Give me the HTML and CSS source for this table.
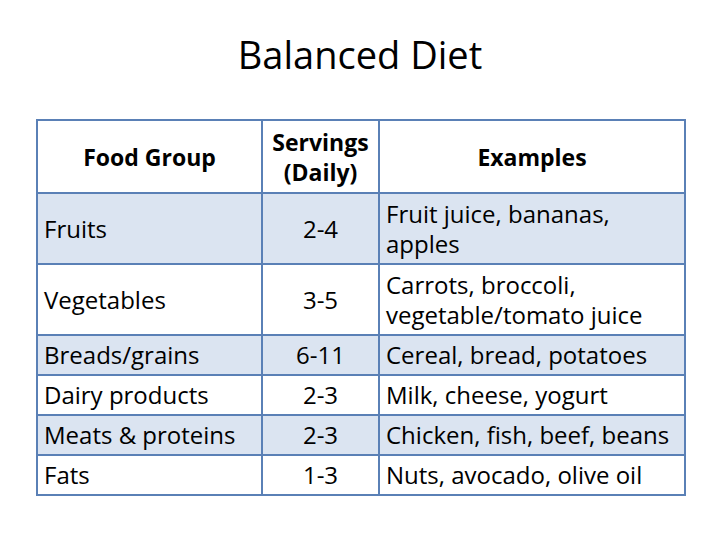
FILE: index.html
```html
<!DOCTYPE html>
<html>
<head>
<meta charset="utf-8">
<link rel="stylesheet" href="styles.css">
</head>
<body>
<div class="slide">
  <h1 class="title">Balanced Diet</h1>
  <table class="diet">
    <colgroup>
      <col class="c1"><col class="c2"><col class="c3">
    </colgroup>
    <thead>
      <tr class="head">
        <th>Food Group</th>
        <th>Servings<br>(Daily)</th>
        <th>Examples</th>
      </tr>
    </thead>
    <tbody>
      <tr class="tall alt"><td>Fruits</td><td class="num">2-4</td><td>Fruit juice, bananas,<br>apples</td></tr>
      <tr class="tall"><td>Vegetables</td><td class="num">3-5</td><td>Carrots, broccoli,<br>vegetable/tomato juice</td></tr>
      <tr class="short alt"><td>Breads/grains</td><td class="num">6-11</td><td>Cereal, bread, potatoes</td></tr>
      <tr class="short"><td>Dairy products</td><td class="num">2-3</td><td>Milk, cheese, yogurt</td></tr>
      <tr class="short alt"><td>Meats &amp; proteins</td><td class="num">2-3</td><td>Chicken, fish, beef, beans</td></tr>
      <tr class="short"><td>Fats</td><td class="num">1-3</td><td>Nuts, avocado, olive oil</td></tr>
    </tbody>
  </table>
</div>
</body>
</html>
```
FILE: styles.css
```css
html, body {
  margin: 0;
  padding: 0;
  background: #ffffff;
}
.slide {
  width: 720px;
  height: 540px;
  font-family: "Open Sans", "DejaVu Sans", sans-serif;
  color: #000000;
  display: flex;
  flex-direction: column;
  align-items: flex-start;
}
.title {
  align-self: stretch;
  margin: 32px 0 0 0;
  font-size: 38px;
  font-weight: 400;
  line-height: 44px;
  text-align: center;
}
.diet {
  margin: 43px 0 0 36px;
  border-collapse: collapse;
  width: 648px;
  table-layout: fixed;
  font-size: 24px;
  line-height: 30px;
}
.c1 { width: 225px; }
.c2 { width: 117px; }
.c3 { width: 306px; }
.diet th, .diet td {
  border: 2px solid #5a80b6;
  padding: 0 6px;
  vertical-align: middle;
  text-align: left;
  white-space: nowrap;
}
.diet th {
  font-weight: 700;
  font-size: 23px;
  text-align: center;
}
.diet td.num { text-align: center; }
.head { height: 73px; }
.tall { height: 71px; }
.short { height: 40px; }
.alt { background: #dbe4f1; }
```
